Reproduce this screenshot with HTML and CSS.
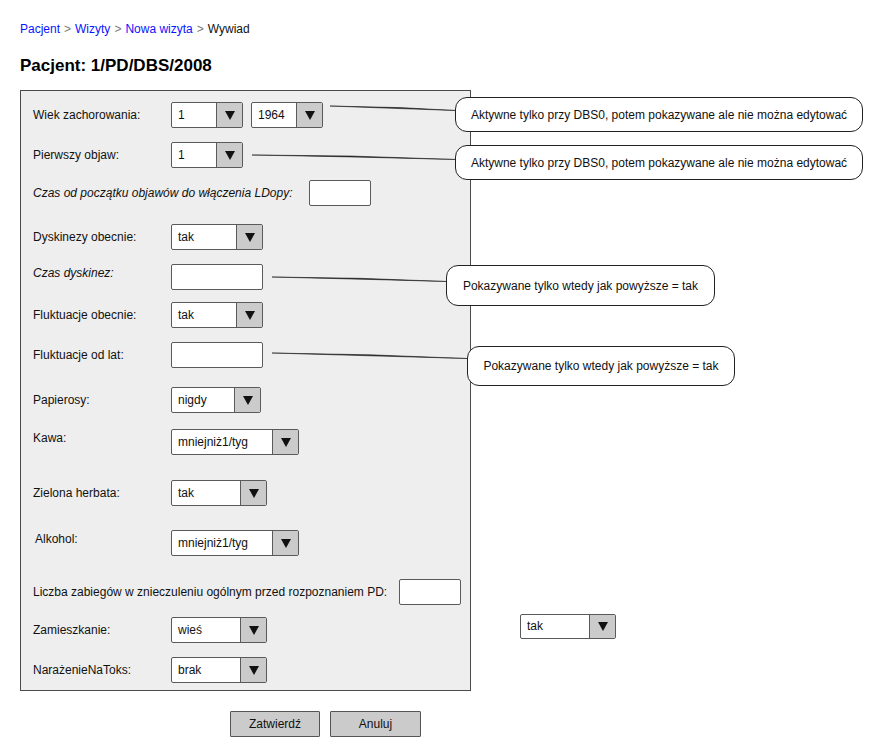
FILE: index.html
```html
<!DOCTYPE html>
<html lang="pl">
<head>
<meta charset="utf-8">
<title>Wywiad</title>
<link rel="stylesheet" href="styles.css">
</head>
<body>
<div class="page">
  <nav class="crumbs">
    <a href="#">Pacjent</a><span class="sep">&gt;</span><a href="#">Wizyty</a><span class="sep">&gt;</span><a href="#">Nowa wizyta</a><span class="sep">&gt;</span><span class="current">Wywiad</span>
  </nav>
  <h1 class="title">Pacjent: 1/PD/DBS/2008</h1>

  <form class="panel">
    <div class="row r1">
      <span class="label">Wiek zachorowania:</span>
      <div class="select w72"><span class="val">1</span><span class="btn"><svg viewBox="0 0 10 9" width="10" height="9"><path d="M0 0H10L5 9Z"/></svg></span></div>
      <div class="select w72 ml8"><span class="val">1964</span><span class="btn"><svg viewBox="0 0 10 9" width="10" height="9"><path d="M0 0H10L5 9Z"/></svg></span></div>
    </div>
    <div class="row r2">
      <span class="label">Pierwszy objaw:</span>
      <div class="select w72"><span class="val">1</span><span class="btn"><svg viewBox="0 0 10 9" width="10" height="9"><path d="M0 0H10L5 9Z"/></svg></span></div>
    </div>
    <div class="row r3">
      <span class="label auto it">Czas od początku objawów do włączenia LDopy:</span>
      <div class="input w62 ml-a"></div>
    </div>
    <div class="row r4">
      <span class="label">Dyskinezy obecnie:</span>
      <div class="select w92"><span class="val">tak</span><span class="btn"><svg viewBox="0 0 10 9" width="10" height="9"><path d="M0 0H10L5 9Z"/></svg></span></div>
    </div>
    <div class="row r5">
      <span class="label it up">Czas dyskinez:</span>
      <div class="input w92"></div>
    </div>
    <div class="row r6">
      <span class="label">Fluktuacje obecnie:</span>
      <div class="select w92"><span class="val">tak</span><span class="btn"><svg viewBox="0 0 10 9" width="10" height="9"><path d="M0 0H10L5 9Z"/></svg></span></div>
    </div>
    <div class="row r7">
      <span class="label">Fluktuacje od lat:</span>
      <div class="input w92"></div>
    </div>
    <div class="row r8">
      <span class="label">Papierosy:</span>
      <div class="select w90"><span class="val">nigdy</span><span class="btn"><svg viewBox="0 0 10 9" width="10" height="9"><path d="M0 0H10L5 9Z"/></svg></span></div>
    </div>
    <div class="row r9">
      <span class="label up">Kawa:</span>
      <div class="select w128"><span class="val">mniejniż1/tyg</span><span class="btn"><svg viewBox="0 0 10 9" width="10" height="9"><path d="M0 0H10L5 9Z"/></svg></span></div>
    </div>
    <div class="row r10">
      <span class="label">Zielona herbata:</span>
      <div class="select w96"><span class="val">tak</span><span class="btn"><svg viewBox="0 0 10 9" width="10" height="9"><path d="M0 0H10L5 9Z"/></svg></span></div>
    </div>
    <div class="row r11">
      <span class="label up indent">Alkohol:</span>
      <div class="select w128"><span class="val">mniejniż1/tyg</span><span class="btn"><svg viewBox="0 0 10 9" width="10" height="9"><path d="M0 0H10L5 9Z"/></svg></span></div>
    </div>
    <div class="row r12">
      <span class="label auto">Liczba zabiegów w znieczuleniu ogólnym przed rozpoznaniem PD:</span>
      <div class="input w62 ml-b"></div>
    </div>
    <div class="row r13">
      <span class="label">Zamieszkanie:</span>
      <div class="select w96"><span class="val">wieś</span><span class="btn"><svg viewBox="0 0 10 9" width="10" height="9"><path d="M0 0H10L5 9Z"/></svg></span></div>
    </div>
    <div class="row r14">
      <span class="label">NarażenieNaToks:</span>
      <div class="select w96"><span class="val">brak</span><span class="btn"><svg viewBox="0 0 10 9" width="10" height="9"><path d="M0 0H10L5 9Z"/></svg></span></div>
    </div>
  </form>

  <div class="actions">
    <button type="button" class="button b-ok">Zatwierdź</button>
    <button type="button" class="button b-cancel">Anuluj</button>
  </div>

  <!-- annotations on the mockup canvas -->
  <svg class="connectors" width="882" height="755" viewBox="0 0 882 755">
    <path d="M330 106 L400 107.6 L456 110.5 L400 108.6 Z"/>
    <path d="M252 155 L350 156 L456 159.5 L350 156.9 Z"/>
    <path d="M272 277 L360 278.3 L447 281.5 L360 279.2 Z"/>
    <path d="M272 353 L370 354.8 L467 358.5 L370 355.8 Z"/>
  </svg>

  <div class="note n1">Aktywne tylko przy DBS0, potem pokazywane ale nie można edytować</div>
  <div class="note n2">Aktywne tylko przy DBS0, potem pokazywane ale nie można edytować</div>
  <div class="note n3">Pokazywane tylko wtedy jak powyższe = tak</div>
  <div class="note n4">Pokazywane tylko wtedy jak powyższe = tak</div>

  <div class="select w96 loose"><span class="val">tak</span><span class="btn"><svg viewBox="0 0 10 9" width="10" height="9"><path d="M0 0H10L5 9Z"/></svg></span></div>
</div>
</body>
</html>
```

FILE: styles.css
```css
* { box-sizing: border-box; }

html, body {
  margin: 0;
  padding: 0;
  background: #ffffff;
}

body {
  font-family: "Liberation Sans", Arial, sans-serif;
  font-size: 12px;
  color: #111;
}

.page {
  position: relative;
  width: 882px;
  height: 755px;
  overflow: hidden;
}

/* breadcrumb */
.crumbs {
  padding: 22px 0 0 20px;
  height: 37px;
  line-height: 15px;
  font-size: 12px;
}
.crumbs a {
  color: #0a14ff;
  text-decoration: none;
}
.crumbs .sep {
  color: #777;
  margin: 0 4px;
}
.crumbs .current { color: #111; }

.title {
  margin: 19px 0 0 20px;
  height: 20px;
  line-height: 20px;
  font-size: 17px;
  font-weight: bold;
  color: #000;
}

/* form panel */
.panel {
  margin: 14px 0 0 20px;
  width: 451px;
  height: 601px;
  background: #eeeeee;
  border: 1px solid #4a4a4a;
  padding: 11px 0 0 12px;
  display: flex;
  flex-direction: column;
}

.row {
  display: flex;
  align-items: center;
  height: 26px;
  flex: none;
}
.r2 { margin-top: 14px; }
.r3 { margin-top: 12px; }
.r4 { margin-top: 18px; }
.r5 { margin-top: 14px; }
.r6 { margin-top: 12px; }
.r7 { margin-top: 14px; }
.r8 { margin-top: 19px; }
.r9 { margin-top: 16px; }
.r10 { margin-top: 25px; }
.r11 { margin-top: 24px; }
.r12 { margin-top: 23px; }
.r13 { margin-top: 12px; }
.r14 { margin-top: 14px; }

.label {
  width: 138px;
  flex: none;
  white-space: nowrap;
  color: #111;
}
.label.auto { width: auto; }
.label.it { font-style: italic; }
.label.up { position: relative; top: -4px; }
.label.indent { padding-left: 2px; }

.ml8 { margin-left: 8px; }
.ml-a { margin-left: 17px; }
.ml-b { margin-left: 12px; }

/* select */
.select {
  display: flex;
  height: 26px;
  border: 1px solid #5a5a5a;
  border-radius: 2px;
  background: #fff;
  flex: none;
  overflow: hidden;
}
.select .val {
  flex: 1;
  padding-left: 6px;
  line-height: 24px;
  color: #111;
  white-space: nowrap;
}
.select .btn {
  width: 26px;
  flex: none;
  background: #cbcbcb;
  border-left: 1px solid #5a5a5a;
  display: flex;
  align-items: center;
  justify-content: center;
}
.select .btn svg { fill: #111; display: block; }

.w72 { width: 72px; }
.w90 { width: 90px; }
.w92 { width: 92px; }
.w96 { width: 96px; }
.w128 { width: 128px; }
.w62 { width: 62px; }

.input {
  height: 26px;
  background: #fff;
  border: 1px solid #5a5a5a;
  border-radius: 2px;
  flex: none;
}

/* buttons */
.actions {
  display: flex;
  gap: 10px;
  margin: 20px 0 0 230px;
}
.button {
  height: 26px;
  background: #cbcbcb;
  border: 1px solid #555;
  border-radius: 1px;
  font-family: "Liberation Sans", Arial, sans-serif;
  font-size: 12px;
  color: #111;
  padding: 0;
}
.b-ok { width: 90px; }
.b-cancel { width: 91px; }

/* annotations */
.connectors {
  position: absolute;
  left: 0;
  top: 0;
  pointer-events: none;
}
.connectors path {
  fill: #222;
  stroke: #222;
  stroke-width: 0.6;
}

.note {
  position: absolute;
  background: #fff;
  border: 1px solid #222;
  border-radius: 12px;
  display: flex;
  align-items: center;
  justify-content: center;
  white-space: nowrap;
  font-size: 12px;
  color: #111;
}
.n1 { left: 455px; top: 97px; width: 408px; height: 35px; }
.n2 { left: 455px; top: 145px; width: 408px; height: 35px; }
.n3 { left: 446px; top: 265px; width: 269px; height: 41px; }
.n4 { left: 467px; top: 346px; width: 268px; height: 40px; }

.select.loose {
  position: absolute;
  left: 520px;
  top: 614px;
  height: 25px;
}
.select.loose .val { line-height: 23px; }
```
